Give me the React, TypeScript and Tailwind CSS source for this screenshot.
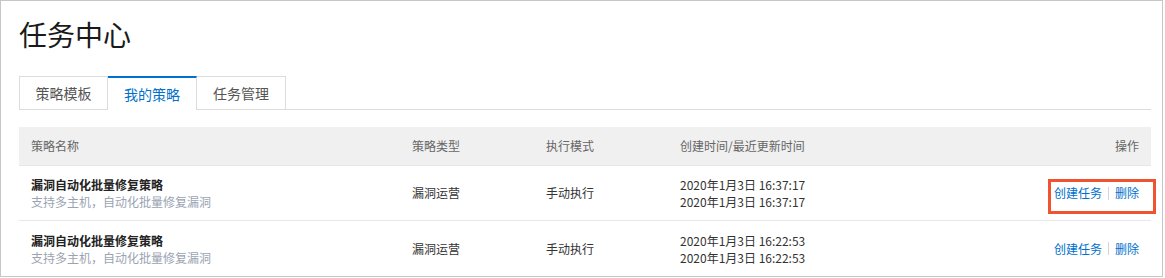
const rows = [
  {
    name: "漏洞自动化批量修复策略",
    desc: "支持多主机，自动化批量修复漏洞",
    type: "漏洞运营",
    mode: "手动执行",
    created: "2020年1月3日 16:37:17",
    updated: "2020年1月3日 16:37:17",
  },
  {
    name: "漏洞自动化批量修复策略",
    desc: "支持多主机，自动化批量修复漏洞",
    type: "漏洞运营",
    mode: "手动执行",
    created: "2020年1月3日 16:22:53",
    updated: "2020年1月3日 16:22:53",
  },
];

const tabs = ["策略模板", "我的策略", "任务管理"];
const gridCols = "grid grid-cols-[381px_134px_134px_1fr_140px] px-3";

export default function App() {
  return (
    <div
      className="relative h-[278px] w-[1165px] bg-white"
      style={{ fontFamily: '"Noto Sans CJK SC", "Liberation Sans", sans-serif' }}
    >
      <div className="flex h-[277px] w-[1163px] flex-col border border-[#c6c6c6] pl-[18px] pr-[11px]">
        <h1 className="mt-[13px] h-[40px] text-[28px] leading-[40px] font-normal text-[#1a1a1a]">
          任务中心
        </h1>

        <div className="mt-[22px] flex h-[36px] border-b border-[#dcdcdc]">
          {tabs.map((tab, i) => {
            const active = i === 1;
            return (
              <div
                key={tab}
                className={
                  active
                    ? "-mb-px flex w-[89px] items-center justify-center border-t-2 border-r border-[#0070cc] border-r-[#dcdcdc] bg-white text-[14px] text-[#0070cc]"
                    : i === 0
                      ? "flex w-[89px] items-center justify-center border border-b-0 border-[#dcdcdc] text-[14px] text-[#555]"
                      : "flex w-[89px] items-center justify-center border-t border-r border-[#dcdcdc] text-[14px] text-[#555]"
                }
              >
                {tab}
              </div>
            );
          })}
        </div>

        <div className="mt-[17px] text-[12px]">
          <div className={`${gridCols} h-[39px] items-center border-b border-[#e6e6e6] bg-[#f0f0f0] text-[#666]`}>
            <div>策略名称</div>
            <div>策略类型</div>
            <div>执行模式</div>
            <div>创建时间/最近更新时间</div>
            <div className="text-right">操作</div>
          </div>
          {rows.map((row, i) => (
            <div
              key={i}
              className={`${gridCols} h-[55px] items-center text-[#333] ${i === 0 ? "border-b border-[#e8e8e8]" : ""}`}
            >
              <div className="leading-[17px]">
                <div className="font-bold text-[#222]">{row.name}</div>
                <div className="text-[#9aa3b2]">{row.desc}</div>
              </div>
              <div>{row.type}</div>
              <div>{row.mode}</div>
              <div className="leading-[17px]">
                <div>{row.created}</div>
                <div>{row.updated}</div>
              </div>
              <div className="flex items-center justify-end text-[#0070cc]">
                <span>创建任务</span>
                <span className="mx-[6px] h-[13px] w-px bg-[#d4d4d4]" />
                <span>删除</span>
              </div>
            </div>
          ))}
        </div>
      </div>

      <div className="absolute top-[179px] left-[1048px] h-[35px] w-[108px] border-[3px] border-[#f0532f]" />
    </div>
  );
}
